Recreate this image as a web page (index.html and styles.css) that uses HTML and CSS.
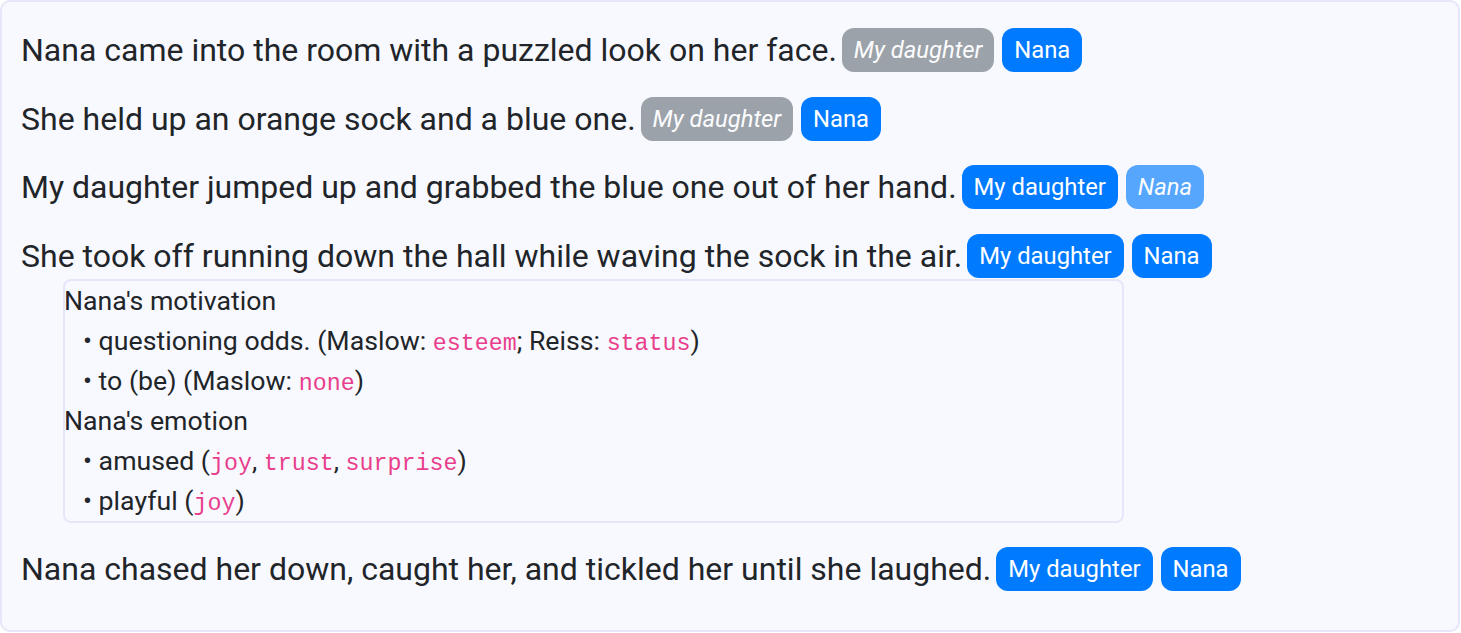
FILE: index.html
```html
<!DOCTYPE html>
<html>
<head>
<meta charset="utf-8">
<link rel="stylesheet" href="styles.css">
</head>
<body>
<div class="card">
  <div class="row">Nana came into the room with a puzzled look on her face. <span class="tags"><span class="badge grey faded">My daughter</span> <span class="badge blue">Nana</span></span></div>
  <div class="row">She held up an orange sock and a blue one. <span class="tags"><span class="badge grey faded">My daughter</span> <span class="badge blue">Nana</span></span></div>
  <div class="row">My daughter jumped up and grabbed the blue one out of her hand. <span class="tags"><span class="badge blue">My daughter</span> <span class="badge blue faded">Nana</span></span></div>
  <div class="row last">She took off running down the hall while waving the sock in the air. <span class="tags"><span class="badge blue">My daughter</span> <span class="badge blue">Nana</span></span></div>
  <div class="details">
    <div class="head">Nana's motivation</div>
    <div class="item">• questioning odds. (Maslow: <code>esteem</code>; Reiss: <code>status</code>)</div>
    <div class="item">• to (be) (Maslow: <code>none</code>)</div>
    <div class="head">Nana's emotion</div>
    <div class="item">• amused (<code>joy</code>, <code>trust</code>, <code>surprise</code>)</div>
    <div class="item">• playful (<code>joy</code>)</div>
  </div>
  <div class="row">Nana chased her down, caught her, and tickled her until she laughed. <span class="tags"><span class="badge blue">My daughter</span> <span class="badge blue">Nana</span></span></div>
</div>
</body>
</html>
```

FILE: styles.css
```css
html, body {
  margin: 0;
  padding: 0;
  background: #ffffff;
}
body {
  font-family: Roboto, "Liberation Sans", sans-serif;
  color: #212529;
}
.card {
  box-sizing: border-box;
  width: 1460px;
  height: 632px;
  border: 2px solid #e6e6fa;
  border-radius: 10px;
  background: #f8f9fe;
  padding: 26px 19px 0 19px;
}
.row {
  font-size: 32px;
  height: 44px;
  line-height: 44px;
  white-space: nowrap;
  margin-bottom: 24.6px;
}
.row.last {
  margin-bottom: 1px;
}
.tags {
  margin-left: -3px;
}
.badge {
  display: inline-block;
  vertical-align: top;
  height: 44px;
  line-height: 44px;
  padding: 0 12px;
  border-radius: 12px;
  font-size: 23.8px;
  color: #ffffff;
}
.badge.blue { background: #007bff; }
.badge.grey { background: #6c757d; }
.badge.faded {
  opacity: 0.65;
  font-style: italic;
}
.details {
  margin-left: 42px;
  width: 1061px;
  box-sizing: border-box;
  border: 2px solid #e6e6fa;
  border-radius: 8px;
  padding: 0;
  margin-bottom: 24px;
  font-size: 26.7px;
}
.head, .item {
  height: 40px;
  line-height: 40px;
  white-space: nowrap;
}
.head {
  margin-left: -1px;
}
.item {
  padding-left: 18px;
}
code {
  font-family: "Liberation Mono", "DejaVu Sans Mono", monospace;
  font-size: 23.3px;
  line-height: 1;
  color: #e83e8c;
}
```
